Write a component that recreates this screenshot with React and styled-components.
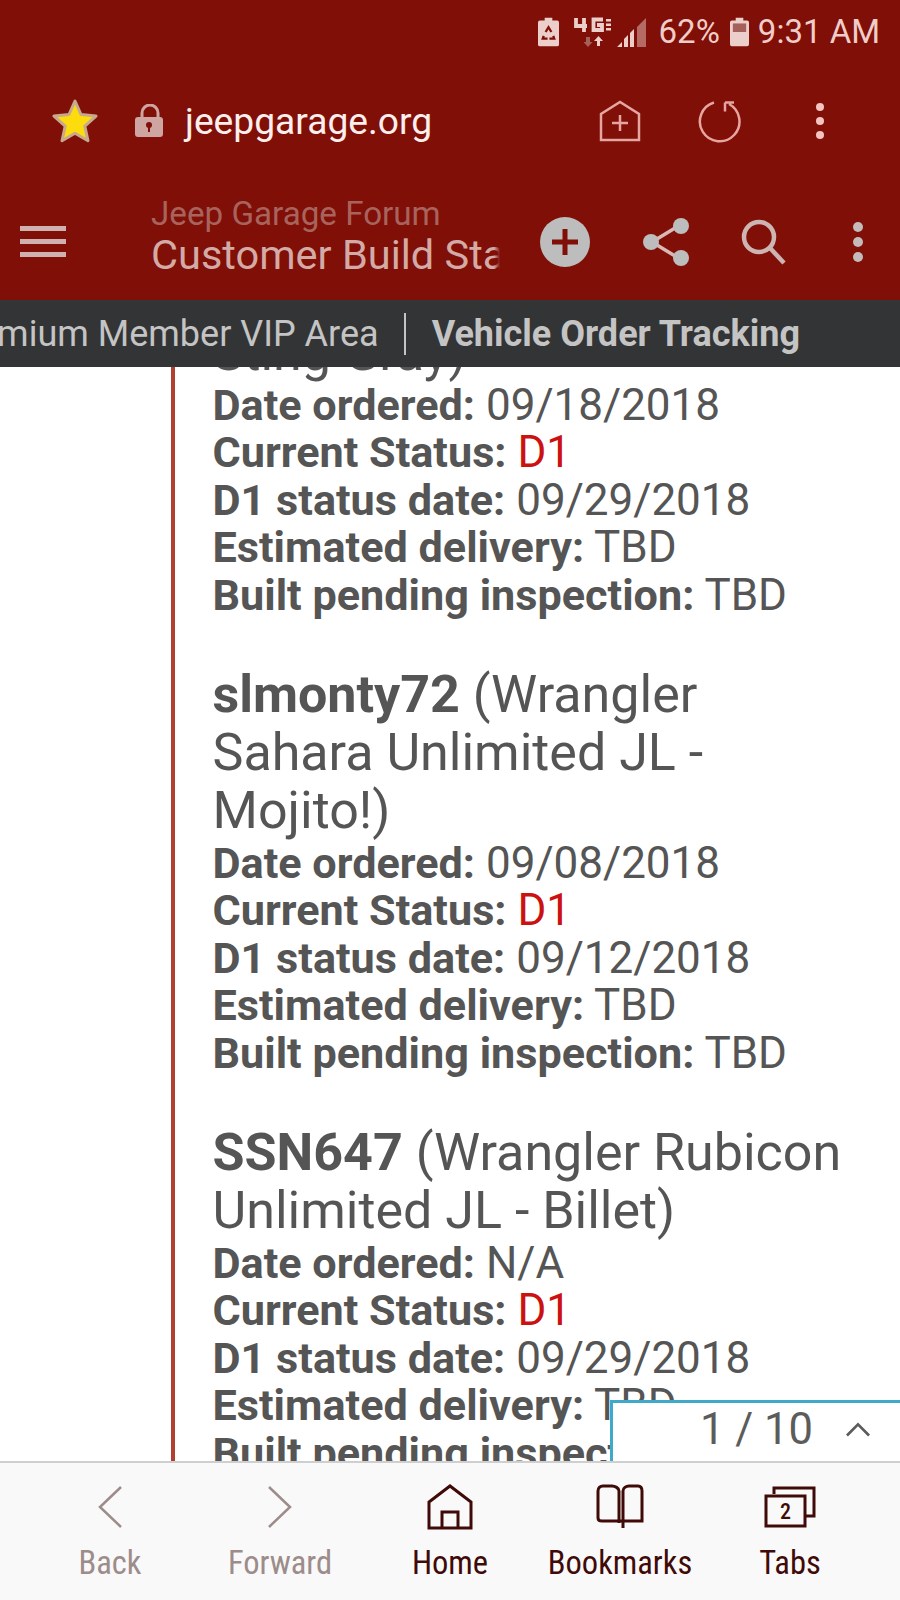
import React from "react";
import styled, { createGlobalStyle } from "styled-components";

const Global = createGlobalStyle`
  html, body { margin: 0; padding: 0; background: #fff; }
  body { font-family: Roboto, "Liberation Sans", sans-serif; }
  * { box-sizing: border-box; }
`;

const Page = styled.div`
  width: 900px;
  height: 1600px;
  display: flex;
  flex-direction: column;
  overflow: hidden;
`;
const Chrome = styled.header`
  background: #7f0f07;
  height: 300px;
  display: flex;
  flex-direction: column;
  flex: none;
`;
const StatusBar = styled.div`
  height: 60px;
  display: flex;
  align-items: center;
  justify-content: flex-end;
  padding: 3px 20px 0 0;
  color: #f0cdc9;
  font-size: 33px;
  font-stretch: 90%;
`;
const StatusText = styled.span`
  margin-left: ${(p) => p.$gap || 0}px;
`;
const StatusIcon = styled.svg`
  display: block;
  flex: none;
  margin-left: ${(p) => p.$gap || 0}px;
`;
const UrlBar = styled.div`
  height: 124px;
  display: flex;
  align-items: center;
  padding-left: 52px;
  padding-bottom: 2px;
`;
const Domain = styled.span`
  color: #fbeeec;
  font-size: 37.2px;
  margin-left: 20px;
  width: 414px;
`;
const AppBar = styled.div`
  height: 116px;
  display: flex;
  align-items: center;
  padding-left: 20px;
`;
const Titles = styled.div`
  width: 349px;
  margin-left: 85px;
  overflow: hidden;
  white-space: nowrap;
  position: relative;
  padding-bottom: 12px;
  &::after {
    content: "";
    position: absolute;
    right: 0;
    top: 0;
    bottom: 0;
    width: 6px;
    background: linear-gradient(to right, rgba(127, 15, 7, 0), #7f0f07);
  }
`;
const ForumName = styled.div`
  color: #a8635d;
  font-size: 33.2px;
  line-height: 38px;
`;
const ThreadName = styled.div`
  color: #d3aaa6;
  font-size: 41.5px;
  line-height: 44px;
`;
const Svg = styled.svg`
  display: block;
  flex: none;
  margin-left: ${(p) => p.$gap || 0}px;
`;
const Crumbs = styled.nav`
  height: 67px;
  background: #333435;
  color: #c4c4c4;
  font-size: 36px;
  display: flex;
  align-items: center;
  justify-content: flex-end;
  padding: 0 100px 0 0;
  white-space: nowrap;
  flex: none;
  overflow: hidden;
`;
const CrumbLink = styled.span`
  flex: none;
  font-weight: ${(p) => (p.$current ? 700 : 400)};
`;
const Divider = styled.i`
  flex: none;
  width: 2px;
  height: 42px;
  margin: 0 26px 0 25px;
  background: #c4c4c4;
`;
const Content = styled.main`
  flex: 1;
  position: relative;
  overflow: hidden;
  background: #fff;
`;
const Quote = styled.blockquote`
  margin: -43px 0 0 171px;
  padding-left: 37.500px;
  width: 700px;
  border-left: 4.5px solid #b04030;
  color: #555;
  font-size: 44px;
  line-height: 47.4px;
`;
const Entry = styled.section`
  margin-bottom: 47px;
`;
const Member = styled.div`
  font-size: 52px;
  line-height: 58px;
`;
const Row = styled.div``;
const Label = styled.b`
  font-size: 43.2px;
`;
const Red = styled.span`
  color: #cc1111;
`;
const Pager = styled.div`
  position: absolute;
  right: 0;
  bottom: 0;
  width: 290px;
  height: 61px;
  background: #fff;
  border-top: 3px solid #3fa9c9;
  border-left: 3px solid #3fa9c9;
  color: #5c5c5c;
  font-size: 43.5px;
  display: flex;
  align-items: center;
  padding: 0 0 6px 87px;
`;
const BottomNav = styled.footer`
  height: 139px;
  flex: none;
  background: #f9f9f9;
  border-top: 2px solid #cfcfcf;
  display: grid;
  grid-template-columns: repeat(5, 170px);
  padding: 0 25px;
`;
const NavItem = styled.div`
  display: flex;
  flex-direction: column;
  align-items: center;
  padding-top: 20px;
  color: ${(p) => (p.$off ? "#9c8c8a" : "#3f0a08")};
  font-size: 32.5px;
  font-stretch: 85%;
  line-height: 36px;
`;
const NavIconBox = styled.div`
  height: 48px;
  margin-bottom: 14px;
  display: flex;
  align-items: center;
`;

const Dots = ({ color, gap, r, step }) => (
  <Svg $gap={gap} width="24" height={step * 2 + r * 2 + 2} viewBox={`0 0 24 ${step * 2 + r * 2 + 2}`} fill={color}>
    <circle cx="12" cy={r + 1} r={r} />
    <circle cx="12" cy={r + 1 + step} r={r} />
    <circle cx="12" cy={r + 1 + step * 2} r={r} />
  </Svg>
);

const entries = [
  { ordered: "09/18/2018", status: "09/29/2018", tail: true },
  { name: "slmonty72", desc: " (Wrangler Sahara Unlimited JL - Mojito!)", ordered: "09/08/2018", status: "09/12/2018" },
  { name: "SSN647", desc: " (Wrangler Rubicon Unlimited JL - Billet)", ordered: "N/A", status: "09/29/2018" },
];

export default function App() {
  return (
    <Page>
      <Global />
      <Chrome>
        <StatusBar>
          <StatusIcon width="21" height="30" viewBox="0 0 22 30">
            <path fill="#eccfcb" d="M7 0h8v3h5a2 2 0 0 1 2 2v23a2 2 0 0 1-2 2H2a2 2 0 0 1-2-2V5a2 2 0 0 1 2-2h5z" />
            <path fill="none" stroke="#7f0f07" strokeWidth="2.4" d="M8 15l3-5 3 5M6 19l-1 3h5M16 19l1 3h-5" />
          </StatusIcon>
          <StatusIcon $gap={14} width="40" height="30" viewBox="0 0 40 30">
            <path fill="none" stroke="#eccfcb" strokeWidth="3.800" d="M3 1v8h11M11 1v14M30 2.500H20.500v10.500H29V8h-5" />
            <path fill="#eccfcb" d="M33 2h5v2.500h-5zM33 6.500h5V9h-5zM33 11h5v2.500h-5z" />
            <path fill="#a5605b" d="M13 20h4v5h2.500L15 30l-4.500-5H13z" />
            <path fill="#eccfcb" d="M24 29v-5h-3l4.500-5 4.500 5h-3v5z" />
          </StatusIcon>
          <StatusIcon $gap={3} width="31" height="30" viewBox="0 0 31 30">
            <path fill="#eccfcb" d="M1 30l5-5v5zM8 30v-8l4-4v12zM14 30V16l4-4v18z" />
            <path fill="#b56a64" d="M21 30V10l9-9v29z" />
          </StatusIcon>
          <StatusText $gap={12}>62%</StatusText>
          <StatusIcon $gap={10} width="19" height="30" viewBox="0 0 20 30">
            <path fill="#eccfcb" d="M6 0h8v3h4a2 2 0 0 1 2 2v23a2 2 0 0 1-2 2H2a2 2 0 0 1-2-2V5a2 2 0 0 1 2-2h4z" />
            <path fill="#a5605b" d="M3 6h14v9H3z" />
          </StatusIcon>
          <StatusText $gap={9}>9:31 AM</StatusText>
        </StatusBar>
        <UrlBar>
          <Svg width="46" height="46" viewBox="0 0 46 46">
            <path fill="#fcdc0c" stroke="#c8a98e" strokeWidth="3" strokeLinejoin="round" d="M23 3l6 13.5 15 1.6-11.200 10 3.200 14.600L23 35.200 10 42.700l3.200-14.600L2 18.100l15-1.600z" />
          </Svg>
          <Svg $gap={37} width="30" height="34" viewBox="0 0 30 34">
            <path fill="none" stroke="#cfa5a2" strokeWidth="3" d="M7 14V9a8 8 0 0 1 16 0v5" />
            <rect y="13" width="28" height="20" rx="3" fill="#cfa5a2" />
            <circle cx="14" cy="21" r="3" fill="#7f0f07" />
            <path stroke="#7f0f07" strokeWidth="2" d="M14 22v6" />
          </Svg>
          <Domain>jeepgarage.org</Domain>
          <Svg width="42" height="42" viewBox="0 0 42 42" fill="none" stroke="#e6a5a0" strokeWidth="2.500">
            <path d="M2 40V14L21 2l19 12v26zM21 15v16M13 23h16" />
          </Svg>
          <Svg $gap={56} width="44" height="44" viewBox="0 0 44 44" fill="none" stroke="#e6a5a0" strokeWidth="2.500">
            <path d="M17 3.500A19.800 19.800 0 1 0 32 5M28 3.500h9M28 3.500v9" />
          </Svg>
          <Dots color="#f3c4c0" gap={67} r={4} step={14} />
        </UrlBar>
        <AppBar>
          <Svg width="46" height="32" viewBox="0 0 46 32" fill="#cfb2b0">
            <path d="M0 0h46v5H0zM0 13h46v5H0zM0 26h46v5H0z" />
          </Svg>
          <Titles>
            <ForumName>Jeep Garage Forum</ForumName>
            <ThreadName>Customer Build Status</ThreadName>
          </Titles>
          <Svg $gap={40} width="50" height="50" viewBox="0 0 50 50">
            <circle cx="25" cy="25" r="25" fill="#bdbdbd" />
            <path fill="#7f0f07" d="M22.500 12h5v10.500H38v5H27.500V38h-5V27.500H12v-5h10.500z" />
          </Svg>
          <Svg $gap={52} width="48" height="50" viewBox="0 0 48 50" fill="#bdbdbd" stroke="#d9b8b5">
            <path fill="none" strokeWidth="3.500" stroke="#d9b8b5" d="M38 8L10 25l28 17" />
            <circle cx="39" cy="9" r="8" stroke="none" />
            <circle cx="9" cy="25" r="8" stroke="none" />
            <circle cx="39" cy="41" r="8" stroke="none" />
          </Svg>
          <Svg $gap={50} width="46" height="46" viewBox="0 0 46 46" fill="none" stroke="#cdb5b3" strokeWidth="4.500">
            <circle cx="19" cy="18" r="15" />
            <path d="M30 29l14 15" />
          </Svg>
          <Dots color="#c4bcbb" gap={60} r={5} step={15} />
        </AppBar>
      </Chrome>
      <Crumbs>
        <CrumbLink>Premium Member VIP Area</CrumbLink>
        <Divider />
        <CrumbLink $current>Vehicle Order Tracking</CrumbLink>
      </Crumbs>
      <Content>
        <Quote>
          {entries.map((e, i) => (
            <Entry key={i}>
              {e.name ? (
                <Member>
                  <b>{e.name}</b>
                  {e.desc}
                </Member>
              ) : (
                <Member>Sting Gray)</Member>
              )}
              <Row><Label>Date ordered:</Label> {e.ordered}</Row>
              <Row><Label>Current Status:</Label> <Red>D1</Red></Row>
              <Row><Label>D1 status date:</Label> {e.status}</Row>
              <Row><Label>Estimated delivery:</Label> TBD</Row>
              <Row><Label>Built pending inspection:</Label> TBD</Row>
            </Entry>
          ))}
        </Quote>
        <Pager>
          1 / 10
          <Svg $gap={33} width="24" height="16" viewBox="0 0 26 16" fill="none" stroke="#5c5c5c" strokeWidth="3">
            <path d="M1 15L13 3l12 12" />
          </Svg>
        </Pager>
      </Content>
      <BottomNav>
        <NavItem $off>
          <NavIconBox>
            <Svg width="26" height="44" viewBox="0 0 26 44" fill="none" stroke="#9c8c8a" strokeWidth="2.500">
              <path d="M24 2L3 22l21 20" />
            </Svg>
          </NavIconBox>
          Back
        </NavItem>
        <NavItem $off>
          <NavIconBox>
            <Svg width="26" height="44" viewBox="0 0 26 44" fill="none" stroke="#9c8c8a" strokeWidth="2.500">
              <path d="M2 2l21 20L2 42" />
            </Svg>
          </NavIconBox>
          Forward
        </NavItem>
        <NavItem>
          <NavIconBox>
            <Svg width="46" height="46" viewBox="0 0 46 46" fill="none" stroke="#3f0a08" strokeWidth="3">
              <path d="M2 44V18L23 2l21 16v26zM15 44V28h16v16" />
            </Svg>
          </NavIconBox>
          Home
        </NavItem>
        <NavItem>
          <NavIconBox>
            <Svg width="48" height="46" viewBox="0 0 48 46" fill="none" stroke="#3f0a08" strokeWidth="3">
              <path d="M27 44V7c0-3 3-5 6-5h9c3 0 4 2 4 5v30l-19 0M27 37H6c-3 0-4-1-4-3V7c0-3 2-5 5-5h9c3 0 7 2 7 5v32" />
            </Svg>
          </NavIconBox>
          Bookmarks
        </NavItem>
        <NavItem>
          <NavIconBox>
            <Svg width="52" height="42" viewBox="0 0 52 42" fill="none" stroke="#3f0a08" strokeWidth="3">
              <path d="M10 8V2h40v28h-9" />
              <rect x="2" y="10" width="39" height="30" />
              <text x="21.500" y="33" fontSize="22" fill="#3f0a08" stroke="none" textAnchor="middle" fontFamily="Roboto, sans-serif" fontWeight="500">2</text>
            </Svg>
          </NavIconBox>
          Tabs
        </NavItem>
      </BottomNav>
    </Page>
  );
}
